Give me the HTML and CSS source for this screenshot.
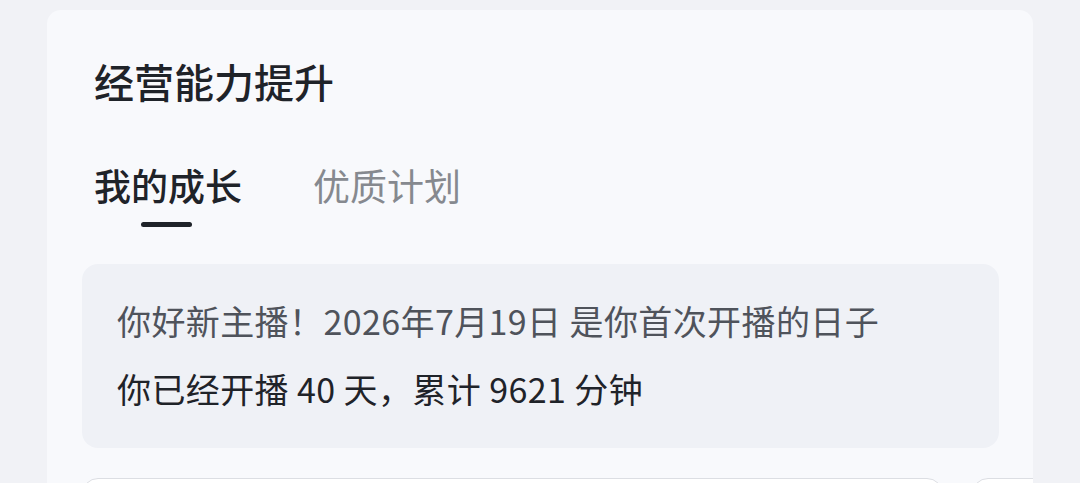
FILE: index.html
```html
<!DOCTYPE html>
<html lang="zh-CN">
<head>
<meta charset="utf-8">
<title>经营能力提升</title>
<link rel="stylesheet" href="styles.css">
</head>
<body>
  <main class="page">
    <section class="card">
      <h1 class="title">经营能力提升</h1>
      <nav class="tabs">
        <div class="tab tab-active">我的成长<span class="indicator"></span></div>
        <div class="tab">优质计划</div>
      </nav>
      <div class="info">
        <p class="info-line muted">你好新主播！2026年7月19日 是你首次开播的日子</p>
        <p class="info-line strong">你已经开播 40 天，累计 9621 分钟</p>
      </div>
      <div class="cards-row">
        <div class="sub-card"></div>
        <div class="sub-card"></div>
      </div>
    </section>
  </main>
</body>
</html>
```
FILE: styles.css
```css
* { box-sizing: border-box; }
html, body {
  margin: 0;
  padding: 0;
  height: 483px;
  overflow: hidden;
  background: #f1f2f6;
  font-family: "Noto Sans CJK SC", "Noto Sans", sans-serif;
}
.page {
  padding: 10px 47px 0 47px;
}
.card {
  background: #f8f9fc;
  border-radius: 14px;
  padding: 47px 34px 40px 35px;
  overflow: hidden;
}
.title {
  margin: 0;
  padding-left: 12px;
  font-size: 40px;
  line-height: 48px;
  font-weight: 500;
  color: #1f2329;
}
.tabs {
  display: flex;
  gap: 71px;
  padding-left: 12px;
  margin-top: 58px;
}
.tab {
  position: relative;
  font-size: 37px;
  line-height: 44px;
  color: #86898f;
  font-weight: 400;
  padding-bottom: 20px;
}
.tab-active {
  color: #1f2329;
  font-weight: 500;
}
.indicator {
  position: absolute;
  left: 50%;
  bottom: 0;
  width: 51px;
  height: 5px;
  margin-left: -27px;
  border-radius: 3px;
  background: #1f2329;
}
.info {
  margin-top: 37px;
  background: #eff1f6;
  border-radius: 16px;
  padding: 35px 35px 37px 35px;
  display: flex;
  flex-direction: column;
  gap: 24px;
}
.info-line {
  margin: 0;
  font-size: 34px;
  line-height: 44px;
  letter-spacing: 0.4px;
}
.muted {
  color: #4f535b;
}
.strong {
  color: #1f2329;
  font-weight: 400;
}
.cards-row {
  display: flex;
  gap: 29px;
  margin-top: 30px;
  margin-right: -34px;
}
.sub-card {
  flex: 0 0 861px;
  height: 160px;
  background: #ffffff;
  border: 1px solid #dcdee3;
  border-radius: 16px;
}
```
